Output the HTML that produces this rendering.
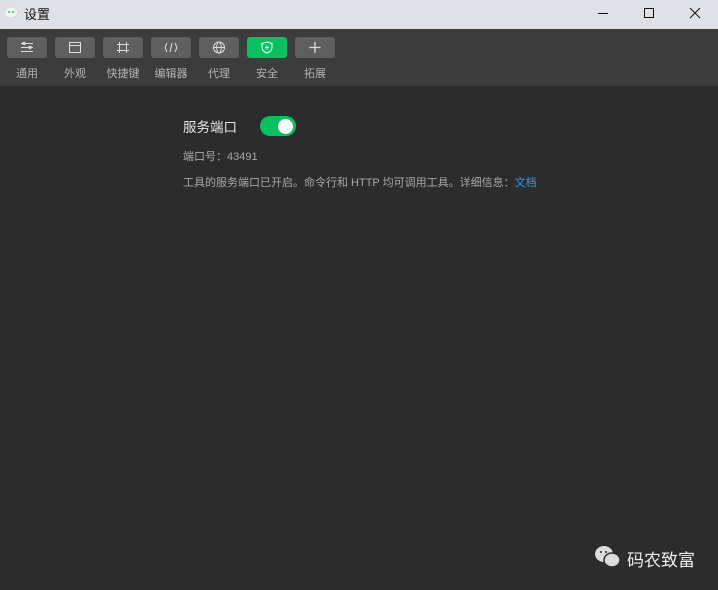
<!DOCTYPE html><html><head><meta charset="utf-8"><style>
body{margin:0;width:718px;height:590px;background:#2c2c2c;font-family:"Liberation Sans","Noto Sans CJK SC",sans-serif;overflow:hidden;position:relative}
.title{position:absolute;left:0;top:0;width:718px;height:29px;background:#dfe1e6}
.title span{position:absolute;left:24px;top:4px;font-size:13px;color:#111}
.tb{position:absolute;left:0;top:29px;width:718px;height:57px;background:#3c3c3c}
.btn{position:absolute;top:8px;width:40px;height:21px;background:#5f5f5f;border-radius:3px}
.btn svg{position:absolute;left:13px;top:4px}
.lbl{position:absolute;top:36px;width:40px;text-align:center;font-size:11px;color:#b4b4b4}
.t{position:absolute;color:#a8a8a8;font-size:11px}
</style></head><body>
<div class="title">
<svg style="position:absolute;left:4px;top:6px" width="15" height="14"><ellipse cx="7" cy="6.5" rx="6.5" ry="5.5" fill="#f4f4f4" stroke="#ccc" stroke-width=".5"/><circle cx="5" cy="6" r="1" fill="#2bb964"/><circle cx="9" cy="6" r="1" fill="#2bb964"/></svg>
<span>设置</span>
<svg style="position:absolute;left:598px;top:8px" width="110" height="12" stroke="#111" fill="none" stroke-width="1"><path d="M0 5.5h10"/><path d="M46.5 0.5h9v9h-9z"/><path d="M92 0l10 10M102 0l-10 10"/></svg>
</div>
<div class="tb">
<div class="btn" style="left:7px"><svg width="14" height="13" stroke="#ddd" fill="none"><path d="M1 2.5h12M1 6.5h12M1 10.5h12"/><circle cx="4" cy="2.5" r="1.2"/><circle cx="10" cy="6.5" r="1.2"/></svg></div>
<div class="btn" style="left:55px"><svg width="14" height="13" stroke="#ddd" fill="none"><rect x="1.5" y="1.5" width="11" height="10"/><path d="M1.5 4.5h11"/></svg></div>
<div class="btn" style="left:103px"><svg width="14" height="13" stroke="#ddd" fill="none"><path d="M3.5 1v11M10.5 1v11M1 3.5h12M1 9.5h12"/></svg></div>
<div class="btn" style="left:151px"><svg width="14" height="13" stroke="#ddd" fill="none"><path d="M3 2L1 6.5 3 11M11 2l2 4.5L11 11M8 2L6 11"/></svg></div>
<div class="btn" style="left:199px"><svg width="14" height="13" stroke="#ddd" fill="none"><circle cx="7" cy="6.5" r="5.5"/><ellipse cx="7" cy="6.5" rx="2.3" ry="5.5"/><path d="M1.5 6.5h11"/></svg></div>
<div class="btn" style="left:247px;background:#07c160"><svg width="14" height="13" stroke="#fff" fill="none"><path d="M7 1L2 2.5v4C2 9 4 11 7 12c3-1 5-3 5-5.5v-4z"/><path d="M7 4.5v4M5 6.5h4"/></svg></div>
<div class="btn" style="left:295px"><svg width="14" height="13" stroke="#ddd" fill="none" stroke-width="1.3"><path d="M7 1v11M1.5 6.5h11"/></svg></div>
<div class="lbl" style="left:7px">通用</div><div class="lbl" style="left:55px">外观</div><div class="lbl" style="left:100px;width:46px">快捷键</div><div class="lbl" style="left:148px;width:46px">编辑器</div><div class="lbl" style="left:199px">代理</div><div class="lbl" style="left:247px">安全</div><div class="lbl" style="left:295px">拓展</div>
</div>
<div style="position:absolute;left:183px;top:116px;font-size:13.5px;color:#e6e6e6">服务端口</div>
<div style="position:absolute;left:260px;top:116px;width:36px;height:20px;border-radius:10px;background:#07c160"><div style="position:absolute;right:3px;top:2.5px;width:15px;height:15px;border-radius:50%;background:#fff"></div></div>
<div class="t" style="left:183px;top:148px">端口号：43491</div>
<div class="t" style="left:183px;top:174px">工具的服务端口已开启。命令行和 HTTP 均可调用工具。详细信息：<span style="color:#2a9df4">文档</span></div>
<svg style="position:absolute;left:594px;top:545px" width="28" height="24"><ellipse cx="10" cy="9" rx="9" ry="8" fill="#ddd"/><ellipse cx="18" cy="15" rx="8" ry="7" fill="#ddd" stroke="#2c2c2c" stroke-width="1.5"/><circle cx="7" cy="7" r="1" fill="#2c2c2c"/><circle cx="12" cy="7" r="1" fill="#2c2c2c"/></svg>
<div style="position:absolute;left:627px;top:546px;font-size:17px;color:#eee">码农致富</div>
</body></html>
